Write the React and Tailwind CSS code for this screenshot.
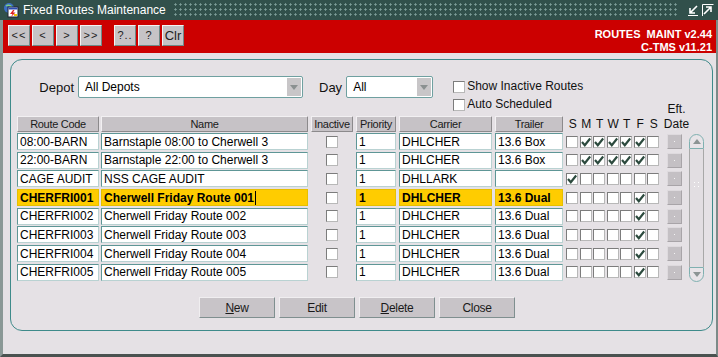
import React from "react";

const rows = [
  ["08:00-BARN", "Barnstaple 08:00 to Cherwell 3", "DHLCHER", "13.6 Box", [0, 1, 1, 1, 1, 1, 0]],
  ["22:00-BARN", "Barnstaple 22:00 to Cherwell 3", "DHLCHER", "13.6 Box", [0, 1, 1, 1, 1, 1, 0]],
  ["CAGE AUDIT", "NSS CAGE AUDIT", "DHLLARK", "", [1, 0, 0, 0, 0, 0, 0]],
  ["CHERFRI001", "Cherwell Friday Route 001", "DHLCHER", "13.6 Dual", [0, 0, 0, 0, 0, 1, 0], true],
  ["CHERFRI002", "Cherwell Friday Route 002", "DHLCHER", "13.6 Dual", [0, 0, 0, 0, 0, 1, 0]],
  ["CHERFRI003", "Cherwell Friday Route 003", "DHLCHER", "13.6 Dual", [0, 0, 0, 0, 0, 1, 0]],
  ["CHERFRI004", "Cherwell Friday Route 004", "DHLCHER", "13.6 Dual", [0, 0, 0, 0, 0, 1, 0]],
  ["CHERFRI005", "Cherwell Friday Route 005", "DHLCHER", "13.6 Dual", [0, 0, 0, 0, 0, 1, 0]],
];

function Check({ on }) {
  return (
    <div className="w-[12px] h-[12px] bg-white border border-t-[#7c7c7c] border-l-[#7c7c7c] border-r-[#b8b8b8] border-b-[#b8b8b8] flex items-center justify-center shrink-0">
      {on ? (
        <svg width="10" height="10" viewBox="0 0 10 10">
          <path d="M1 5 L3.8 8.2 L9.2 1.5" fill="none" stroke="#2c4a3e" strokeWidth="2.2" />
        </svg>
      ) : null}
    </div>
  );
}

function Cell({ w, hl, ml, children }) {
  return (
    <div
      className={`h-[17px] shrink-0 flex items-center pl-[2px] overflow-hidden whitespace-nowrap border ${
        hl
          ? "bg-[#ffcc00] border-[#e6c000] font-bold text-black"
          : "bg-white border-t-[#5e9696] border-l-[#5e9696] border-r-[#b9d2d2] border-b-[#b9d2d2] text-black"
      }`}
      style={{ width: w, marginLeft: ml }}
    >
      {children}
    </div>
  );
}

function Head({ w, ml, children }) {
  return (
    <div
      className="h-[16px] shrink-0 flex items-center justify-center bg-[#c6c2c6] border border-t-[#f2f0f2] border-l-[#f2f0f2] border-r-[#8c8a8c] border-b-[#8c8a8c] text-[11px] text-[#1a1a1a] tracking-[-0.3px] rounded-[1px]"
      style={{ width: w, marginLeft: ml }}
    >
      {children}
    </div>
  );
}

function ToolBtn({ children }) {
  return (
    <div className="w-[22px] h-[21px] flex items-center justify-center bg-[#c6c3c6] border border-t-[#f4f4f4] border-l-[#f4f4f4] border-r-[#6e8a88] border-b-[#6e8a88] text-[11px] text-[#222] tracking-[1px]">
      {children}
    </div>
  );
}

function BigBtn({ children }) {
  return (
    <div className="w-[76px] h-[21px] flex items-center justify-center bg-[#c8c4c8] border border-t-[#f0eef0] border-l-[#f0eef0] border-r-[#7f8f8f] border-b-[#7f8f8f] text-[12px] text-[#1a1a1a] tracking-[-0.3px]">
      {children}
    </div>
  );
}

function Select({ w, value }) {
  return (
    <div
      className="h-[22px] bg-white border border-[#6fa0a0] rounded-[2px] flex items-center shrink-0"
      style={{ width: w }}
    >
      <div className="flex-1 pl-[6px] text-[12px] text-black">{value}</div>
      <div className="w-[14px] h-[18px] mr-[1px] bg-[#c8c6c8] flex items-center justify-center">
        <svg width="8" height="5" viewBox="0 0 8 5">
          <path d="M0 0 L8 0 L4 5 Z" fill="#8a9090" />
        </svg>
      </div>
    </div>
  );
}

export default function App() {
  return (
    <div className="w-[718px] h-[357px] bg-white overflow-hidden flex flex-col font-['Liberation_Sans',Arial,sans-serif]">
      {/* title bar */}
      <div className="h-[20px] shrink-0 bg-[#31504b] flex items-center">
        <div className="w-[20px] h-[20px] flex items-center justify-center ml-[1px]">
          <svg width="16" height="16" viewBox="0 0 16 16">
            <circle cx="6" cy="6" r="5" fill="#3b6fc4" />
            <path d="M3 4 Q6 2 9 5" stroke="#7fd07f" strokeWidth="1.5" fill="none" />
            <rect x="5" y="5" width="10" height="10" fill="#fff" stroke="#223" strokeWidth="1" />
            <rect x="5.5" y="5.5" width="9" height="2" fill="#2a4bb0" />
            <path d="M10 8 L7 12 L9.5 12 L8 15 L12.5 10.5 L10 10.5 L11.5 8 Z" fill="#e02020" />
            <rect x="11" y="12" width="3" height="2" fill="#f0c000" />
          </svg>
        </div>
        <div className="text-white text-[12px] ml-[2px] whitespace-nowrap">Fixed Routes Maintenance</div>
        <div className="flex-1 h-[14px] ml-[8px] mr-[8px] bg-[radial-gradient(circle_at_1.5px_1.5px,#7e9e99_0.9px,transparent_1.3px)] bg-[length:5px_5px]"></div>
        <div className="flex items-center gap-[3px] mr-[4px]">
          <svg width="12" height="12" viewBox="0 0 12 12">
            <path d="M10 2 L3 9 M3 4 L3 9 L8 9" stroke="#fff" strokeWidth="1.6" fill="none" />
            <path d="M1 11.5 L11 11.5" stroke="#fff" strokeWidth="1" />
          </svg>
          <svg width="12" height="12" viewBox="0 0 12 12">
            <path d="M2 10 L9 3 M4 3 L9 3 L9 8" stroke="#fff" strokeWidth="1.6" fill="none" />
            <path d="M0.5 12 L0.5 0.5 L11.5 0.5" stroke="#fff" strokeWidth="1" fill="none" />
          </svg>
        </div>
      </div>

      {/* body */}
      <div className="flex-1 flex flex-col border-l-[3px] border-l-[#8a9896] border-r-2 border-r-[#7c8a88] border-b-[3px] border-b-[#4a5250] bg-[#e5e1e5]">
        {/* red toolbar */}
        <div className="h-[33px] shrink-0 bg-[#cc0000] flex items-start">
          <div className="flex gap-[2px] ml-[5px] mt-[5px]">
            <ToolBtn>&lt;&lt;</ToolBtn>
            <ToolBtn>&lt;</ToolBtn>
            <ToolBtn>&gt;</ToolBtn>
            <ToolBtn>&gt;&gt;</ToolBtn>
          </div>
          <div className="flex gap-[2px] ml-[12px] mt-[5px]">
            <ToolBtn>?..</ToolBtn>
            <ToolBtn>?</ToolBtn>
            <div className="w-[22px] h-[21px] flex items-center justify-center bg-[#c6c3c6] border border-t-[#f4f4f4] border-l-[#f4f4f4] border-r-[#6e8a88] border-b-[#6e8a88] text-[13px] text-[#222]">
              Clr
            </div>
          </div>
          <div className="flex-1 flex flex-col items-end pr-[4px] pt-[8px] text-white font-bold text-[11px] leading-[13px] whitespace-pre">
            <div>ROUTES  MAINT v2.44</div>
            <div>C-TMS v11.21</div>
          </div>
        </div>

        {/* content panel */}
        <div className="flex-1 flex flex-col pt-[6px] pl-[7px] pr-[3px] pb-[23px]">
          <div className="flex-1 border border-[#3e8a8a] rounded-[12px] flex flex-col pl-[6px] pt-[16px]">
            {/* filter row */}
            <div className="h-[40px] flex items-start shrink-0">
              <div className="w-[57px] text-right text-[13px] text-[#111] mt-[2px]">Depot</div>
              <div className="ml-[4px]">
                <Select w={225} value="All Depots" />
              </div>
              <div className="ml-[16px] text-[13px] text-[#111] mt-[2px]">Day</div>
              <div className="ml-[4px]">
                <Select w={87} value="All" />
              </div>
              <div className="ml-[20px] flex flex-col gap-[5px] mt-[4px]">
                <div className="flex items-center gap-[2px]">
                  <Check />
                  <span className="text-[12px] text-[#111] leading-[13px]">Show Inactive Routes</span>
                </div>
                <div className="flex items-center gap-[2px]">
                  <Check />
                  <span className="text-[12px] text-[#111] leading-[13px]">Auto Scheduled</span>
                </div>
              </div>
            </div>

            {/* header row */}
            <div className="flex items-end shrink-0 h-[16px]">
              <Head w={82} ml={0}>Route Code</Head>
              <Head w={207} ml={2}>Name</Head>
              <Head w={42} ml={3}>Inactive</Head>
              <Head w={40} ml={3}>Priority</Head>
              <Head w={93} ml={3}>Carrier</Head>
              <Head w={68} ml={3}>Trailer</Head>
              <div className="flex ml-[3px] text-[12px] text-[#111] h-[16px] items-center">
                {["S", "M", "T", "W", "T", "F", "S"].map((d, i) => (
                  <div key={i} className="w-[13.5px] text-center">{d}</div>
                ))}
              </div>
              <div className="ml-[3px] w-[26px] h-[16px] flex flex-col justify-end items-center text-[12px] text-[#111] leading-[15px]">
                <div>Eft.</div>
                <div>Date</div>
              </div>
            </div>

            {/* rows + scrollbar */}
            <div className="flex mt-[1px]">
              <div className="flex flex-col gap-[1.7px]">
                {rows.map((r, i) => {
                  const hl = !!r[5];
                  return (
                    <div key={i} className="flex items-center text-[12px]">
                      <Cell w={82} ml={0} hl={hl}>{r[0]}</Cell>
                      <Cell w={207} ml={2} hl={hl}>
                        {r[1]}
                        {hl ? <span className="inline-block w-[1px] h-[14px] bg-black ml-[1px]"></span> : null}
                      </Cell>
                      <div className="w-[42px] ml-[3px] flex justify-center">
                        <Check />
                      </div>
                      <Cell w={40} ml={3} hl={hl}>{r[2] ? "1" : ""}</Cell>
                      <Cell w={93} ml={3} hl={hl}>{r[2]}</Cell>
                      <Cell w={68} ml={3} hl={hl}>{r[3]}</Cell>
                      <div className="flex ml-[3px] gap-[1.5px]">
                        {r[4].map((v, j) => (
                          <Check key={j} on={v} />
                        ))}
                      </div>
                      <div className="ml-[8px] w-[15px] h-[15px] bg-[#c4c0c4] border border-t-[#dedade] border-l-[#dedade] border-r-[#a8a4a8] border-b-[#a8a4a8] flex items-center justify-center">
                        <div className="w-[1px] h-[1px] bg-[#f4f4f4]"></div>
                      </div>
                    </div>
                  );
                })}
              </div>
              {/* scrollbar */}
              <div className="ml-[7px] w-[15px] mt-[1px] h-[148px] flex flex-col">
                <div className="h-[15px] border border-[#7fb0b0] rounded-t-full bg-[#e8e4e8] flex items-center justify-center">
                  <svg width="8" height="5" viewBox="0 0 8 5">
                    <path d="M0 5 L8 5 L4 0 Z" fill="#8c9494" />
                  </svg>
                </div>
                <div className="flex-1 border-l border-r border-[#a8a8a8] bg-[#e2dee2] flex items-center justify-center">
                  <div className="flex flex-col gap-[3px] -mt-[48px]">
                    <div className="flex gap-[3px]"><div className="w-[1px] h-[1px] bg-white"></div><div className="w-[1px] h-[1px] bg-white"></div></div>
                    <div className="flex gap-[3px]"><div className="w-[1px] h-[1px] bg-white"></div><div className="w-[1px] h-[1px] bg-white"></div></div>
                  </div>
                </div>
                <div className="h-[15px] border border-[#7fb0b0] rounded-b-full bg-[#e8e4e8] flex items-center justify-center">
                  <svg width="8" height="5" viewBox="0 0 8 5">
                    <path d="M0 0 L8 0 L4 5 Z" fill="#8c9494" />
                  </svg>
                </div>
              </div>
            </div>

            {/* bottom buttons */}
            <div className="flex gap-[4px] ml-[182px] mt-[15px]">
              <BigBtn><span><span className="underline">N</span>ew</span></BigBtn>
              <BigBtn>Edit</BigBtn>
              <BigBtn><span><span className="underline">D</span>elete</span></BigBtn>
              <BigBtn>Close</BigBtn>
            </div>
          </div>
        </div>
      </div>
    </div>
  );
}
